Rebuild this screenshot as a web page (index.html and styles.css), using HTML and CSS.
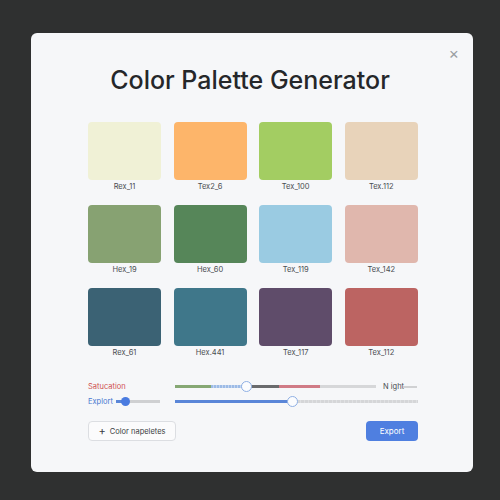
FILE: index.html
```html
<!DOCTYPE html>
<html>
<head>
<meta charset="utf-8">
<link rel="stylesheet" href="styles.css">
</head>
<body>
<div class="card">
  <div class="close">&#215;</div>
  <h1 class="title">Color Palette Generator</h1>
  <div class="grid">
    <div class="item"><div class="sw" style="background:#f0f1d6"></div><div class="lbl">Rex_11</div></div>
    <div class="item"><div class="sw" style="background:#fdb56a"></div><div class="lbl">Tex2_6</div></div>
    <div class="item"><div class="sw" style="background:#a3cd62"></div><div class="lbl">Tex_100</div></div>
    <div class="item"><div class="sw" style="background:#e8d3ba"></div><div class="lbl">Tex.112</div></div>
    <div class="item"><div class="sw" style="background:#87a272"></div><div class="lbl">Hex_19</div></div>
    <div class="item"><div class="sw" style="background:#568659"></div><div class="lbl">Hex_60</div></div>
    <div class="item"><div class="sw" style="background:#9acbe2"></div><div class="lbl">Tex_119</div></div>
    <div class="item"><div class="sw" style="background:#e0b7ad"></div><div class="lbl">Tex_142</div></div>
    <div class="item"><div class="sw" style="background:#3b6274"></div><div class="lbl">Rex_61</div></div>
    <div class="item"><div class="sw" style="background:#3f778a"></div><div class="lbl">Hex.441</div></div>
    <div class="item"><div class="sw" style="background:#5f4c6a"></div><div class="lbl">Tex_117</div></div>
    <div class="item"><div class="sw" style="background:#bc6462"></div><div class="lbl">Tex_112</div></div>
  </div>
  <div class="controls">
    <div class="crow">
      <div class="clabel red">Satucation</div>
      <div class="track t1">
        <span class="seg green" style="width:36px"></span>
        <span class="seg bluedot" style="width:36px"></span>
        <span class="seg dark" style="width:32px"></span>
        <span class="seg pink" style="width:41px"></span>
        <span class="seg light" style="width:56px"></span>
        <span class="knob ring" style="left:66px"></span>
      </div>
      <div class="night">N ight</div>
      <div class="tail"></div>
    </div>
    <div class="crow">
      <div class="clabel blue">Explort</div>
      <div class="track t2">
        <span class="seg blueline" style="width:10px"></span>
        <span class="seg grayline" style="width:34px"></span>
        <span class="knob solid" style="left:5px"></span>
      </div>
      <div class="track t3">
        <span class="seg blueline" style="width:114px"></span>
        <span class="seg graydot" style="width:129px"></span>
        <span class="knob ring" style="left:112px"></span>
      </div>
    </div>
  </div>
  <div class="actions">
    <button class="btn ghost"><span class="plus">+</span>Color napeletes</button>
    <button class="btn primary">Export</button>
  </div>
</div>
</body>
</html>
```
FILE: styles.css
```css
html, body {
  margin: 0;
  padding: 0;
  background: #2f3030;
  width: 500px;
  height: 500px;
  overflow: hidden;
  font-family: Inter, "Liberation Sans", sans-serif;
}
.card {
  position: relative;
  box-sizing: border-box;
  width: 442px;
  height: 439px;
  margin: 33px 0 0 31px;
  padding: 32px 55px 0 57px;
  background: #f6f7f9;
  border-radius: 6px;
}
.close {
  position: absolute;
  top: 11px;
  right: 14px;
  font-size: 16px;
  line-height: 18px;
  color: #9a9ea3;
}
.title {
  margin: 0 3px 0 -3px;
  font-size: 25px;
  line-height: 31px;
  font-weight: 500;
  color: #25272a;
  text-align: center;
}
.grid {
  margin-top: 26px;
  display: grid;
  grid-template-columns: repeat(4, 73px);
  column-gap: 12.6px;
  row-gap: 12px;
}
.item {
  display: flex;
  flex-direction: column;
  align-items: center;
}
.sw {
  width: 73px;
  height: 58px;
  border-radius: 4px;
}
.lbl {
  margin-top: 1px;
  font-size: 7.5px;
  line-height: 12px;
  color: #4a4d52;
}
.controls {
  margin-top: 20px;
  display: flex;
  flex-direction: column;
}
.crow {
  display: flex;
  align-items: center;
  height: 15px;
  white-space: nowrap;
}
.clabel {
  font-size: 7.5px;
  width: 87px;
  flex: none;
}
.crow .clabel.blue { width: 28px; }
.red { color: #d0504f; }
.blue { color: #4a78d0; }
.track {
  position: relative;
  display: flex;
  align-items: center;
  height: 12px;
  flex: none;
}
.t1 { width: 201px; }
.t2 { width: 44px; margin-right: 15px; }
.t3 { width: 243px; }
.seg {
  display: block;
  height: 3px;
}
.green { background: #86a874; }
.bluedot { background: repeating-linear-gradient(90deg, #9dbbe6 0 2px, #c3d6f0 2px 3px); }
.dark { background: #6a6b6d; }
.pink { background: #d07b86; }
.light { background: #d6d7d9; }
.blueline { background: #5a86d8; }
.grayline { background: #cfd0d2; }
.graydot { background: repeating-linear-gradient(90deg, #d5d6d8 0 3px, #e0e1e3 3px 4px); }
.knob {
  position: absolute;
  top: 50%;
  border-radius: 50%;
  box-sizing: border-box;
}
.ring {
  width: 11px;
  height: 11px;
  margin-top: -5.5px;
  background: #fbfcfe;
  border: 1.5px solid #8fb0e4;
}
.solid {
  width: 9px;
  height: 9px;
  margin-top: -4.5px;
  background: #4a7be0;
}
.night {
  margin-left: 7px;
  font-size: 7.5px;
  color: #4a4d52;
  width: 20px;
  flex: none;
}
.tail {
  width: 14px;
  height: 2px;
  background: #d0d1d3;
}
.actions {
  margin-top: 12px;
  display: flex;
  justify-content: space-between;
}
.btn {
  height: 20px;
  border-radius: 4px;
  font-family: Inter, "Liberation Sans", sans-serif;
  font-size: 7.5px;
  padding: 0;
  display: flex;
  align-items: center;
  justify-content: center;
}
.ghost {
  width: 88px;
  background: #fbfbfc;
  border: 1px solid #dcdee2;
  color: #3a3d42;
}
.plus {
  font-size: 11px;
  margin-right: 4px;
  line-height: 10px;
}
.primary {
  width: 52px;
  background: #4f7fe0;
  border: none;
  color: #ffffff;
  font-size: 8px;
}
```
